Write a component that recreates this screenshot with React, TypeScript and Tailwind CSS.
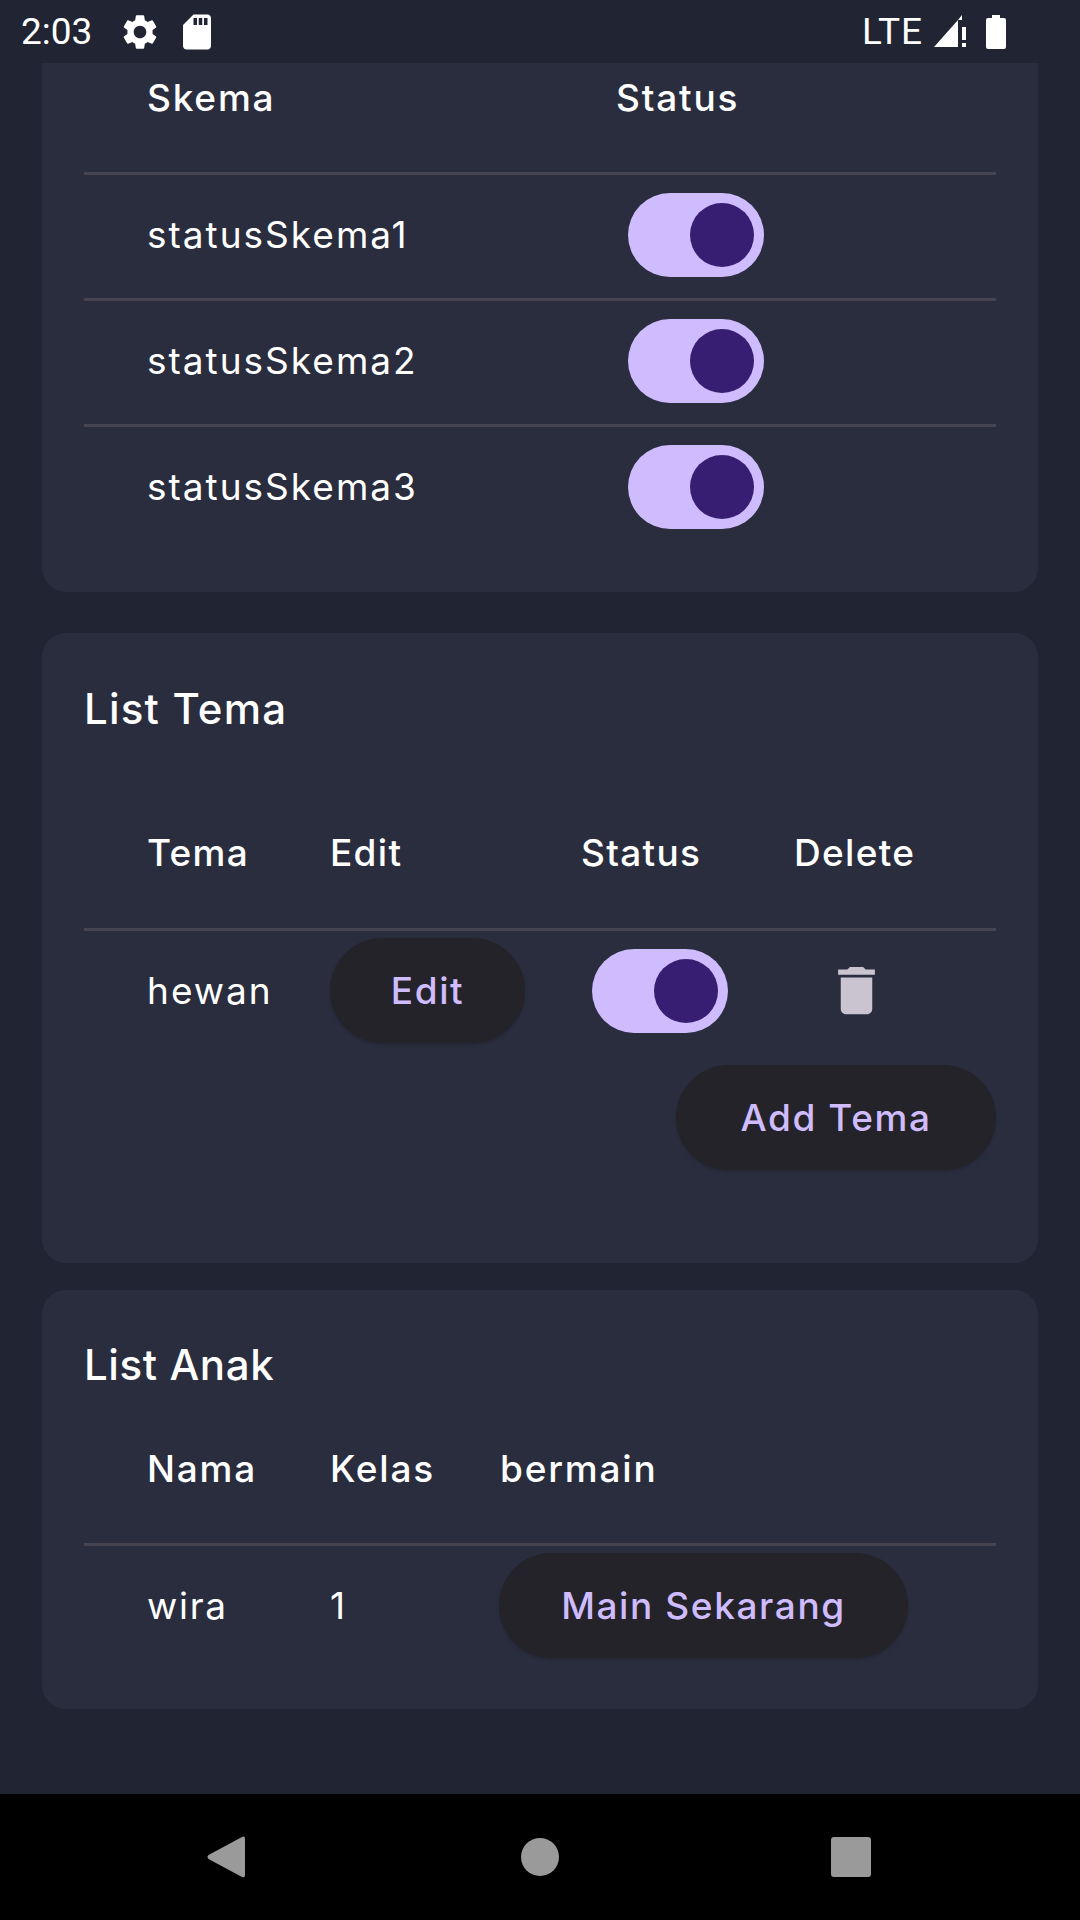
import { MdDelete, MdSdCard, MdSettings } from "react-icons/md";

const FONT = "font-['Inter','Noto_Sans',sans-serif]";

function Toggle() {
  return (
    <div className="flex h-[84px] w-[136px] items-center justify-end rounded-full bg-[#cfbcff] pr-[10px]">
      <div className="h-[64px] w-[64px] rounded-full bg-[#381e72]" />
    </div>
  );
}

function PillButton({ label, className }: { label: string; className: string }) {
  return (
    <button className={`flex h-[105px] items-center justify-center rounded-full bg-[#242329] text-[37px] font-medium tracking-[1.6px] text-[#cfbcff] shadow-[0_2px_3px_rgba(0,0,0,0.15)] ${className}`}>
      {label}
    </button>
  );
}

function Divider() {
  return <div className="h-[3px] bg-[#464450]" />;
}

function SkemaRow({ name }: { name: string }) {
  return (
    <>
      <Divider />
      <div className="grid h-[123px] grid-cols-[469px_1fr] items-center pb-[3px] pl-[63px] text-[37px] tracking-[2px] text-white">
        <div>{name}</div>
        <div className="pl-[12px]">
          <Toggle />
        </div>
      </div>
    </>
  );
}

export default function App() {
  return (
    <div className={`flex h-[1920px] w-[1080px] flex-col overflow-hidden bg-[#212432] ${FONT}`}>
      <div className="flex h-[63px] shrink-0 items-center justify-between pl-[21px] pr-[74px] text-white">
        <div className="flex items-center">
          <span className="font-['Roboto',sans-serif] text-[37px]">2:03</span>
          <MdSettings className="ml-[27px] h-[42px] w-[42px]" />
          <MdSdCard className="ml-[15px] h-[42px] w-[42px]" />
        </div>
        <div className="flex items-center">
          <span className="font-['Roboto',sans-serif] text-[37px] tracking-[1px]">LTE</span>
          <svg viewBox="0 0 34 34" className="ml-[11px] h-[34px] w-[34px]" fill="white">
            <path d="M0 32 L24 5 V32 Z" />
            <path d="M28 0 L24 5 H28 Z" />
            <rect x="28" y="12" width="4" height="13" />
            <rect x="28" y="28" width="4" height="4" />
          </svg>
          <svg viewBox="0 0 20 34" className="ml-[18px] h-[34px] w-[20px]" fill="white">
            <path d="M6 0 H14 V3 H18 Q20 3 20 5 V32 Q20 34 18 34 H2 Q0 34 0 32 V5 Q0 3 2 3 H6 Z" />
          </svg>
        </div>
      </div>

      <main className="flex min-h-0 flex-1 flex-col overflow-hidden px-[42px]">
        <section className="h-[529px] shrink-0 rounded-b-[24px] bg-[#2a2d3e] px-[42px]">
          <div className="grid h-[109px] grid-cols-[469px_1fr] items-center pb-[39px] pl-[63px] text-[37px] font-medium tracking-[1.8px] text-white">
            <div>Skema</div>
            <div>Status</div>
          </div>
          <SkemaRow name="statusSkema1" />
          <SkemaRow name="statusSkema2" />
          <SkemaRow name="statusSkema3" />
        </section>

        <section className="mt-[41px] h-[630px] shrink-0 rounded-[24px] bg-[#2a2d3e] px-[42px]">
          <h2 className="flex h-[150px] items-center text-[42px] font-medium tracking-[1.2px] text-white">List Tema</h2>
          <div className="grid h-[145px] grid-cols-[183px_251px_213px_1fr] items-center pb-[5px] pl-[63px] text-[37px] font-medium tracking-[1.3px] text-white">
            <div>Tema</div>
            <div>Edit</div>
            <div>Status</div>
            <div>Delete</div>
          </div>
          <Divider />
          <div className="grid h-[123px] grid-cols-[183px_251px_213px_1fr] items-center pb-[4px] pl-[63px] text-[37px] tracking-[2px] text-white">
            <div>hewan</div>
            <PillButton label="Edit" className="w-[195px]" />
            <div className="pl-[11px]">
              <Toggle />
            </div>
            <MdDelete className="ml-[31px] h-[63px] w-[63px] text-[#cac4d0]" />
          </div>
          <div className="mt-[11px] flex justify-end">
            <PillButton label="Add Tema" className="w-[320px]" />
          </div>
        </section>

        <section className="mt-[27px] h-[419px] shrink-0 rounded-[24px] bg-[#2a2d3e] px-[42px]">
          <h2 className="flex h-[148px] items-center text-[42px] font-medium tracking-[0.6px] text-white">List Anak</h2>
          <div className="grid h-[105px] grid-cols-[183px_170px_1fr] items-center pb-[43px] pl-[63px] text-[37px] font-medium tracking-[1.8px] text-white">
            <div>Nama</div>
            <div>Kelas</div>
            <div>bermain</div>
          </div>
          <Divider />
          <div className="grid h-[123px] grid-cols-[183px_169px_1fr] items-center pb-[4px] pl-[63px] text-[37px] tracking-[1.7px] text-white">
            <div>wira</div>
            <div>1</div>
            <PillButton label="Main Sekarang" className="w-[409px]" />
          </div>
        </section>
      </main>

      <nav className="flex h-[126px] shrink-0 items-center bg-black pl-[207px]">
        <svg viewBox="0 0 38 42" className="h-[42px] w-[38px]" fill="#9a9a9a">
          <path d="M35 1 Q38 -0.5 38 3 V39 Q38 42.5 35 41 L1.5 23 Q-0.5 21 1.5 19 Z" />
        </svg>
        <div className="ml-[276px] h-[38px] w-[38px] rounded-full bg-[#9a9a9a]" />
        <div className="ml-[272px] h-[40px] w-[40px] rounded-[3px] bg-[#9a9a9a]" />
      </nav>
    </div>
  );
}
